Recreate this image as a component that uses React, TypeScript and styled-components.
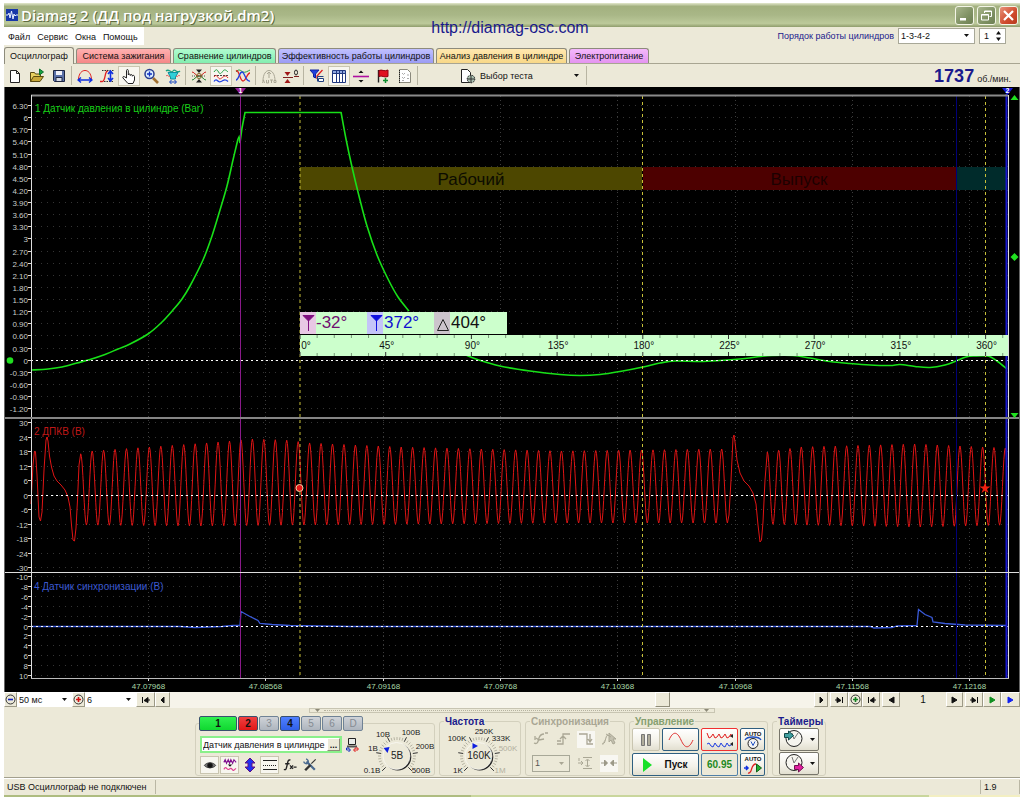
import React from "react";
import styled, { createGlobalStyle } from "styled-components";

const face = "#ece9d8";
const arial = '"Liberation Sans", Arial, sans-serif';

const GlobalStyle = createGlobalStyle`
  * { box-sizing: border-box; }
  body { margin: 0; background: #fff; font-family: ${arial}; font-size: 9px; line-height: 12px; color: #111; }
  button, input, select { font: inherit; color: inherit; margin: 0; padding: 0; border-radius: 0; }
  svg { display: block; flex: none; }
`;

/* ---------- window frame ---------- */

const Window = styled.div`
  position: relative;
  padding: 3px 4px 0;
`;
const TitleBar = styled.header`
  display: flex;
  align-items: center;
  gap: 3px;
  height: 24px;
  padding: 0 2px;
  background: linear-gradient(#e3e8cd, #a3b17f 14%, #a9b787 50%, #bcc99a 85%, #8f9c6c);
`;
const Title = styled.h1`
  flex: 1;
  margin: 0;
  font: 600 15px/22px "Open Sans", "Noto Sans", sans-serif;
  color: #fff;
  text-shadow: 1px 1px 0 #5f6c40;
`;
const WinButton = styled.button<{ $close?: boolean }>`
  display: grid;
  place-items: center;
  width: 19px;
  height: 19px;
  border: 1px solid #f3f5e6;
  border-radius: 3px;
  background: ${(p) => (p.$close ? "linear-gradient(135deg,#e8937a,#cf4a2c 60%,#b73a1e)" : "linear-gradient(135deg,#a8b68c,#7f9163 60%,#6e8053)")};
`;
const SiteLink = styled.a`
  position: absolute;
  top: 19px;
  left: 0;
  right: 4px;
  margin: 0 auto;
  width: max-content;
  font: 16px/18px ${arial};
  color: #1a1a8c;
  text-decoration: none;
`;
const MenuRow = styled.div`
  display: flex;
  justify-content: space-between;
  height: 20px;
  background: ${face};
`;
const Menu = styled.nav`
  display: flex;
  align-items: center;
  gap: 7px;
  height: 18px;
  padding: 1px 6px 0 4px;
  background: #fff;
`;
const MenuItem = styled.button`
  border: 0;
  background: none;
`;
const OrderBox = styled.div`
  display: flex;
  align-items: center;
  gap: 4px;
  padding: 0 14px 3px 0;
  label { color: #1a1a8c; }
`;

const Combo = styled.span<{ $w: number; $h?: number; $line?: string; $plain?: boolean; $off?: boolean }>`
  display: grid;
  align-items: center;
  width: ${(p) => p.$w}px;
  height: ${(p) => p.$h ?? 16}px;
  border: ${(p) => (p.$plain ? "0" : `1px solid ${p.$line ?? "#a8a898"}`)};
  background: ${(p) => (p.$off ? face : "#fff")};
  color: ${(p) => (p.$off ? "#555" : "#111")};
  select {
    grid-area: 1 / 1;
    width: 100%;
    height: 100%;
    padding: 0 2px;
    border: 0;
    appearance: none;
    background: transparent;
    opacity: 1;
  }
  svg {
    grid-area: 1 / 1;
    justify-self: end;
    margin-right: 5px;
    pointer-events: none;
  }
`;
const Spin = styled.span`
  display: flex;
  align-items: center;
  width: 27px;
  height: 16px;
  padding-right: 4px;
  border: 1px solid #a8a898;
  background: #fff;
  input { width: 16px; padding-left: 4px; border: 0; background: none; }
`;

/* ---------- tabs and toolbar ---------- */

const Tabs = styled.div`
  display: flex;
  align-items: flex-end;
  gap: 2px;
  height: 17px;
  background: ${face};
  border-bottom: 1px solid #a8a592;
`;
const Tab = styled.button<{ $w: number; $bg: string; $active?: boolean }>`
  width: ${(p) => p.$w}px;
  height: ${(p) => (p.$active ? 17 : 15)}px;
  margin-bottom: ${(p) => (p.$active ? -1 : 0)}px;
  white-space: nowrap;
  border: 1px solid #8d8b7c;
  border-bottom: 0;
  border-radius: 3px 3px 0 0;
  background: ${(p) => p.$bg};
`;
const Toolbar = styled.div`
  display: flex;
  align-items: center;
  height: 23px;
  background: ${face};
`;
const Tool = styled.button<{ $on?: boolean }>`
  display: grid;
  place-items: center;
  width: 22px;
  height: 20px;
  border: 1px solid ${(p) => (p.$on ? "#c9c5b0" : "transparent")};
  background: ${(p) => (p.$on ? "#f7f6ef" : "none")};
`;
const Sep = styled.span`
  width: 1px;
  height: 19px;
  margin: 0 2px 0 1px;
  background: #b8b5a2;
`;
const TestPicker = styled.button`
  display: flex;
  align-items: center;
  gap: 4px;
  width: 125px;
  height: 20px;
  margin-left: 40px;
  padding-right: 6px;
  border: 0;
  background: none;
  span { flex: 1; text-align: left; }
`;
const Rpm = styled.div`
  display: flex;
  align-items: baseline;
  gap: 3px;
  margin-left: auto;
  padding-right: 9px;
  color: #222;
  strong { font: bold 18px/20px ${arial}; color: #1a1a8c; }
`;

/* ---------- navigation strip ---------- */

const NavRow = styled.div`
  display: flex;
  height: 16px;
  background: ${face};
`;
const NavButton = styled.button<{ $w: number; $gap?: boolean }>`
  display: grid;
  place-items: center;
  width: ${(p) => p.$w}px;
  height: 15px;
  margin-left: ${(p) => (p.$gap ? 2 : 0)}px;
  border: 1px solid;
  border-color: #fff #9c9986 #9c9986 #fff;
  background: ${face};
`;
const Track = styled.div`
  display: flex;
  flex: 1;
  background: #f6f4ea;
`;
const Thumb = styled.button`
  width: 15px;
  height: 15px;
  margin-left: auto;
  margin-right: 144px;
  border: 1px solid;
  border-color: #fff #8f8c79 #8f8c79 #fff;
  background: ${face};
`;
const PageNo = styled.output`
  width: 46px;
  font: 10px/15px ${arial};
  text-align: center;
`;

/* ---------- control panel ---------- */

const Panel = styled.div`
  display: flex;
  flex-direction: column;
  align-items: center;
  height: 70px;
  background: ${face};
  border-bottom: 1px solid #a3a08e;
`;
const Splitter = styled.div`
  display: flex;
  justify-content: space-between;
  align-items: center;
  width: 406px;
  height: 5px;
  padding: 0 5px;
  border: 1px solid #c8c5b2;
`;
const Dots = styled.span`
  flex: 1;
  height: 1px;
  margin: 0 4px;
  border-top: 1px dotted #b5b29f;
`;
const Groups = styled.div`
  display: flex;
  gap: 4px;
  width: 634px;
  height: 60px;
  margin-top: 3px;
`;
const Group = styled.fieldset<{ $w: number }>`
  width: ${(p) => p.$w}px;
  height: 60px;
  min-width: 0;
  margin: 0;
  padding: 0 2px;
  border: 1px solid #d3d0bd;
  border-radius: 3px;
`;
const Legend = styled.legend<{ $color?: string }>`
  margin-left: 2px;
  padding: 0 1px;
  font: bold 10px/11px ${arial};
  color: ${(p) => p.$color ?? "#1a1a8c"};
`;
const ChannelLegend = styled.legend`
  display: flex;
  gap: 1px;
  margin-left: 1px;
  padding: 0;
`;
const Channel = styled.button<{ $bg?: string; $w?: number }>`
  width: ${(p) => p.$w ?? 20}px;
  height: 15px;
  border: 1px solid ${(p) => (p.$bg ? "#39506e" : "#6f8295")};
  border-radius: 2px;
  background: ${(p) => p.$bg ?? "linear-gradient(#cfd3d8,#aeb5be)"};
  color: ${(p) => (p.$bg ? "#111" : "#858b92")};
  font-size: 10px;
  font-weight: ${(p) => (p.$bg ? "bold" : "normal")};
  line-height: 12px;
`;
const Split = styled.div`
  display: flex;
  justify-content: space-between;
`;
const Stack = styled.div`
  display: flex;
  flex-direction: column;
  gap: 3px;
  padding: 5px 0 0 2px;
`;
const Line = styled.div<{ $gap?: number }>`
  display: flex;
  align-items: center;
  gap: ${(p) => p.$gap ?? 2}px;
`;
const NameBox = styled.span`
  display: flex;
  align-items: center;
  width: 142px;
  height: 17px;
  border: 2px solid #8af08a;
  background: #fff;
  input { flex: 1; min-width: 0; padding-left: 1px; border: 0; background: none; outline: 0; }
  button {
    width: 13px;
    height: 13px;
    border: 1px solid;
    border-color: #fff #8f8c79 #8f8c79 #fff;
    background: ${face};
    font: bold 9px/6px ${arial};
  }
`;
const Mini = styled.button<{ $on?: boolean }>`
  display: grid;
  place-items: center;
  width: 19px;
  height: 18px;
  border: 1px solid ${(p) => (p.$on ? "#c9c5b0" : "transparent")};
  background: ${(p) => (p.$on ? "#f7f6ef" : "none")};
`;
const DialSlot = styled.div`
  svg { overflow: visible; }
`;
const GroupRows = styled.div<{ $pad?: number }>`
  display: flex;
  flex-direction: column;
  gap: 2px;
  padding-top: ${(p) => p.$pad ?? 1}px;
`;
const SyncRow = styled.div`
  display: flex;
  align-items: center;
  justify-content: space-between;
  height: 22px;
  padding: 0 4px;
`;
const SyncIcon = styled.button<{ $on?: boolean }>`
  display: grid;
  place-items: center;
  width: 18px;
  height: 17px;
  border: 0;
  background: ${(p) => (p.$on ? "#f8f7f2" : "none")};
`;
const Push = styled.button<{ $w: number; $line?: string; $gap?: number }>`
  display: flex;
  align-items: center;
  justify-content: center;
  gap: ${(p) => p.$gap ?? 12}px;
  width: ${(p) => p.$w}px;
  height: 23px;
  border: 1px solid ${(p) => p.$line ?? "#2f5f80"};
  border-radius: 2px;
  background: linear-gradient(#fff, #f3f1e8 60%, #e2dfd0);
  font: bold 10px/12px ${arial};
  color: #111;
`;
const Value = styled.output`
  display: grid;
  place-items: center;
  width: 37px;
  height: 23px;
  border: 1px solid #5080a8;
  border-radius: 2px;
  font: bold 10px/12px ${arial};
  color: #1e8a1e;
`;

/* ---------- status bar ---------- */

const StatusBar = styled.footer`
  display: flex;
  align-items: center;
  height: 17px;
  background: ${face};
  border-top: 1px solid #fff;
`;
const Cell = styled.span<{ $w?: number }>`
  flex: ${(p) => (p.$w ? "none" : 1)};
  width: ${(p) => (p.$w ? `${p.$w}px` : "auto")};
  height: 14px;
  padding-left: 3px;
  border-right: 1px solid #bab7a4;
  line-height: 14px;
  white-space: nowrap;
`;
const Strip = styled.div`
  height: 2px;
  background: linear-gradient(90deg, #aebc80 46%, #c9d69c 46% 91%, #f3efc2 91%);
`;

/* ---------- icons ---------- */

const Ico = ({ s = 16, children }: { s?: number; children: React.ReactNode }) => (
  <svg width={s} height={s} viewBox="0 0 16 16" fill="none" stroke="#222" strokeWidth="1" aria-hidden="true">
    {children}
  </svg>
);
const Arrow = ({ c = "#111" }: { c?: string }) => (
  <svg width="5" height="3" viewBox="0 0 5 3" aria-hidden="true">
    <path d="M0 0h5L2.500 3z" fill={c} />
  </svg>
);

const icons: Record<string, React.ReactNode> = {
  file: <path d="M3.500 2.500h6l3 3v9h-9zM9.500 2.500v3h3" fill="#fff" />,
  open: (
    <>
      <path d="M1.500 13.500v-9h4l1 1.500h5v2.500" fill="#e8d060" stroke="#5a4a10" />
      <path d="M1.500 13.500l3-5h10l-3.500 5z" fill="#c8a838" stroke="#5a4a10" />
      <path d="M10.500 1v6l4-3z" fill="#18a040" stroke="#0c7030" />
    </>
  ),
  save: (
    <>
      <path d="M2.500 2.500h11v11h-10l-1-1z" fill="#5a70a8" stroke="#1c2440" />
      <path d="M5 3h6v4H5z" fill="#f0f0f8" stroke="none" />
      <path d="M5 9.500h6v4H5z" fill="#d8dce8" stroke="#1c2440" />
    </>
  ),
  arc: (
    <>
      <path d="M1.500 11C2 5 5 2.500 8 2.500S14 5 14.500 11" stroke="#e02020" />
      <path d="M1 12h14M4 9.500L1 12l3 2.500M12 9.500l3 2.500-3 2.500" stroke="#1030e0" strokeWidth="1.400" />
    </>
  ),
  rise: (
    <>
      <path d="M1 13.500h2c4 0 2-10 6-11" stroke="#e02020" strokeWidth="1.300" />
      <path d="M3 2.500h12M5 13.500h10" stroke="#333" strokeDasharray="1.500 1" />
      <path d="M11.500 3.500v9M9 6l2.500-3L14 6M9 10l2.500 3 2.500-3" stroke="#1030e0" strokeWidth="1.600" />
    </>
  ),
  hand: (
    <path
      d="M5.500 10V2.500c0-1.300 1.800-1.300 1.800 0V7c0-1.300 2-1.300 2 0v.5c0-1.200 2-1.200 2 0v.7c0-1.200 2.200-1.100 2.200.3V12l-1.500 3.500H7L2 10c-.8-1.300.8-2 1.600-1.200z"
      fill="#fff"
    />
  ),
  zoom: (
    <>
      <path d="M10 10l5 5" stroke="#a07030" strokeWidth="2.600" />
      <circle cx="6.500" cy="6" r="4.500" fill="#d8ecff" stroke="#283c90" strokeWidth="1.500" />
      <path d="M4 6h5M6.500 3.500v5" stroke="#1030c0" strokeWidth="1.300" />
    </>
  ),
  merge: (
    <>
      <path d="M1 3c3-3 5 3 7 0s4 3 7 0" stroke="#18a080" strokeWidth="1.300" />
      <path d="M3 4.500h10L10.500 9v2h-5V9z" fill="#30d0d8" stroke="#1090a0" />
      <path d="M1 8c2-2 3 2 4 0M11 8c2 2 2-2 4 0" stroke="#e05050" />
      <path d="M5 14h6M6.500 12l-2 2 2 2M9.500 12l2 2-2 2" stroke="#1040c0" />
    </>
  ),
  cross: (
    <>
      <path d="M5 1.500h6L8 5zM5 14.500h6L8 11z" fill="#222" stroke="none" />
      <path d="M1 4c3 0 3 4 7 4s4-4 7-4" stroke="#d02020" />
      <path d="M1 12c3 0 3-4 7-4s4 4 7 4" stroke="#208030" />
      <path d="M1 8h14" stroke="#555" strokeDasharray="1 1" />
      <circle cx="8" cy="8" r="2.500" stroke="#806020" />
    </>
  ),
  waves: (
    <>
      <path d="M1 4c2-3 3-3 4.500 0S8.500 5 10 3s3-1 5 1" stroke="#20a040" />
      <path d="M1 7.500h14" stroke="#444" strokeDasharray="2 1" />
      <path d="M1 9c2-3 3-1 4.500 1s3 0 4.500-1 3-2 5 1" stroke="#e02020" />
      <path d="M1 13.500c2-3 3-1 4.500 0s3 0 4.500-1 3-1 5 1" stroke="#2040e0" strokeWidth="1.300" />
    </>
  ),
  overlay: (
    <>
      <path d="M1 4c3-4 5-1 7 0s5-1 7-2" stroke="#20a040" />
      <path d="M1 3c3-2 4 10 7 10s4-8 7-8" stroke="#e02020" strokeWidth="1.300" />
      <path d="M1 12c3 0 3-8 6-8s3 10 8 9" stroke="#2040e0" strokeWidth="1.300" />
    </>
  ),
  autoGray: (
    <g stroke="#aaa795">
      <path d="M2 13C2 6 5 2.500 8 2.500S14 6 14 13M8 4v6M6 6l2-2 2 2" />
      <path d="M1.500 15l1-3 1 3M5.500 12v3h2v-3M9 12h3M10.500 12v3M13 12.500h2v2h-2z" />
    </g>
  ),
  zero: (
    <>
      <path d="M0 9.500h10M11 8.500h5" stroke="#802020" />
      <path d="M1.500 4h6l-3 4zM1.500 15h6l-3-4z" fill="#a01818" stroke="none" />
      <ellipse cx="13" cy="4.500" rx="1.500" ry="2.500" />
    </>
  ),
  filter: (
    <>
      <path d="M1 2h9L6.500 6v4l-2-1V6z" fill="#2040e0" stroke="#1020a0" />
      <path d="M13.500 2L8 8v3" stroke="#e02020" strokeWidth="1.300" />
      <path d="M8.500 8.500h6M8.500 8.500v5" stroke="#204080" />
      <path d="M9.500 10.500h5v3h-5z" fill="#fff" stroke="#204080" />
    </>
  ),
  table: (
    <>
      <path d="M1.500 2.500h13v12h-13z" fill="#fff" stroke="#203880" />
      <path d="M2 3h12v2.500H2z" fill="#90a8e0" stroke="none" />
      <path d="M1.500 5.500h13M5.500 3v11M8.500 3v11M11.500 3v11" stroke="#203880" />
    </>
  ),
  center: (
    <>
      <path d="M0 8.500h16" stroke="#b010a0" strokeWidth="1.600" />
      <path d="M5.500 5h5L8 2.500zM5.500 12h5L8 14.500z" fill="#111" stroke="none" />
    </>
  ),
  flag: (
    <>
      <path d="M3.500 2v12.500" strokeWidth="1.400" />
      <path d="M4 2.500c3-1.500 5 1.500 9-.5v6.500c-4 1.500-6-1.500-9 0z" fill="#e01020" stroke="#900010" />
      <path d="M10.500 10v5M8 12.500h5" stroke="#109030" strokeWidth="1.500" />
    </>
  ),
  note: (
    <>
      <path d="M2.500 1.500h8l3 3v10h-11z" fill="#fff" stroke="#8a897c" />
      <path d="M5 5l1.500 1.500L8 5M5 9l1.500 1.500L8 9M5 12.500h2M10 10.500h2M10 7h2" stroke="#aaa" />
      <path d="M2.500 2v13" strokeDasharray="1 1" />
    </>
  ),
  test: (
    <>
      <path d="M1.500 1.500h6l3 3v10h-9z" fill="#fff" />
      <circle cx="11" cy="11" r="3.800" fill="#a9c0b0" stroke="#222" strokeDasharray="1.500 .8" />
      <path d="M7 11h8M11 7v8" stroke="#333" />
    </>
  ),
  rename: (
    <>
      <path d="M4.500 1.500h7v6h-7z" fill="#e8ece8" stroke="#222" />
      <path d="M3 9.500h10" stroke="#555" strokeWidth="2" />
      <path d="M5 11H2.500v2H6M4.500 15L6.500 13l-2-2" stroke="#1030c0" />
      <path d="M11 11h3v2h-4M11.500 15l-2-2 2-2" stroke="#e02020" />
    </>
  ),
  eye: (
    <>
      <path d="M1.500 8.500C4 4.500 12 4.500 14.500 8.500 12 12 4 12 1.500 8.500z" fill="#777" stroke="#333" />
      <circle cx="8" cy="8.500" r="2.800" fill="#111" />
    </>
  ),
  noise: (
    <>
      <path d="M1 5l1.500-3L4 6l2-4 1.500 4L9 2l2 4 1.500-4L15 5" stroke="#801090" strokeWidth="1.300" />
      <path d="M5.500 7.500h5L8 10z" fill="#111" stroke="none" />
      <path d="M1 13c2-4 3-1 4.500 0s3-3 5 0 3-1 4.500-1" stroke="#e04090" strokeWidth="1.300" />
    </>
  ),
  updown: <path d="M8 1l5 5h-3v4h3l-5 5-5-5h3V6H3z" fill="#2030f0" stroke="#601080" />,
  lines: (
    <>
      <path d="M1 3.500h14M1 12.500h14" />
      <path d="M1 8.500h14" strokeDasharray="1 1" />
    </>
  ),
  fx: (
    <>
      <path d="M8.500 2.500C5.500 1 5.500 5 4.500 9s-1 5-3.500 4M2.500 6.500h5" strokeWidth="1.600" />
      <path d="M8 8.500l3.500 4M11.500 8.500l-3.500 4M12 10.500h3.500" strokeWidth="1.400" />
    </>
  ),
  tools: (
    <>
      <path d="M4 4l9.500 9.500" stroke="#4a6a90" strokeWidth="2.600" />
      <path d="M1 4c0 2 3 3.500 4.500 1.500S5 1.500 3.500 1" stroke="#4a6a90" strokeWidth="1.600" />
      <path d="M14.500 1.500l-5 5" stroke="#333" strokeWidth="1.300" />
      <path d="M8.500 8L2.500 14" stroke="#333" strokeWidth="2.800" />
    </>
  ),
  syncA: <path d="M1 12c4 2 4-2 5-5s2-4 5-4M3 7l3 2 5-1M2 5v4M12 2h3" stroke="#aaa795" strokeWidth="1.300" />,
  syncB: <path d="M1 13h6V3h7M4 8l3-3 3 3M1 10h4" stroke="#aaa795" strokeWidth="1.300" />,
  syncC: <path d="M1 3h8v10h6M12 3v7M10 8l2 3 2-3" stroke="#aaa795" strokeWidth="1.300" />,
  syncD: <path d="M1 13c4 1 3-9 6-9M5 3l5 3M8 2v9l2-2 2 4 2-1-2-4h3z" fill="#c4c1b0" stroke="#aaa795" />,
  syncE: <path d="M6 2.500h9M6 13.500h9M10.500 5v6M8.500 6l2-2 2 2M8.500 10l2 2 2-2M1 8h5M4 6l2 2-2 2M2 3v3" stroke="#aaa795" />,
  syncF: <path d="M0 8h6M10 8h6M3.500 5v6l3-3zM12.500 5v6l-3-3z" fill="#9c9988" stroke="#9c9988" />,
};

const navShapes: Record<string, string> = {
  first: "M1.500 1v6M3 4.500L7 1.500v5zM7 4h2",
  last: "M7.500 1v6M6 4.500L2 1.500v5zM2 4H0",
  prev: "M6 1v6L3 4z",
  prevWide: "M7 1v6L2 4z",
  next: "M3 1v6l3-3z",
  nextWide: "M2 1v6l5-3z",
};
const NavIcon = ({ kind, c = "#111" }: { kind: string; c?: string }) => (
  <svg width="9" height="8" viewBox="0 0 9 8" fill={c} stroke={c} strokeWidth="1" aria-hidden="true">
    <path d={navShapes[kind]} />
  </svg>
);
const Round = ({ c, plus }: { c: string; plus?: boolean }) => (
  <svg width="11" height="11" viewBox="0 0 11 11" fill="none" aria-hidden="true">
    <circle cx="5.500" cy="5.500" r="4.500" stroke="#333" />
    <path d={plus ? "M3 5.500h5M5.500 3v5" : "M3 5.500h5"} stroke={c} strokeWidth="1.600" />
  </svg>
);

/* ---------- dial ---------- */

type Mark = { x: number; y: number; t: string; off?: boolean };
const Dial = ({ value, marks, at }: { value: string; marks: Mark[]; at: [number, number, number] }) => {
  const ticks = Array.from({ length: 31 }, (_, i) => {
    const a = ((135 + i * 9) * Math.PI) / 180;
    const big = i % 6 === 0;
    return (
      <line
        key={i}
        x1={37 + 16 * Math.cos(a)}
        y1={25 + 16 * Math.sin(a)}
        x2={37 + (big ? 21 : 19) * Math.cos(a)}
        y2={25 + (big ? 21 : 19) * Math.sin(a)}
        stroke={big ? "#333" : "#b5b2a1"}
      />
    );
  });
  return (
    <svg width="74" height="44" viewBox="0 0 74 44" fontFamily={arial} fontSize="8" role="img">
      {ticks}
      <circle cx="37.800" cy="26" r="13.500" fill="#222" />
      <circle cx="36.500" cy="25" r="13.500" fill={face} stroke="#fff" strokeWidth=".6" />
      <path d="M-3 -2.500h6L0 3z" fill="#1020e0" transform={`translate(${at[0]} ${at[1]}) rotate(${at[2]})`} />
      <text x="37" y="28" textAnchor="middle" fontSize="10" fill="#222">
        {value}
      </text>
      {marks.map((m) => (
        <text key={m.t} x={m.x} y={m.y} textAnchor="middle" fill={m.off ? "#b3b0a0" : "#222"}>
          {m.t}
        </text>
      ))}
    </svg>
  );
};

/* ---------- oscilloscope chart ---------- */

const L = 31;
const R = 1008;

const smooth = (p: number[][]) => {
  let d = `M${p[0][0]} ${p[0][1]}`;
  for (let i = 0; i < p.length - 1; i++) {
    const a = p[i - 1] ?? p[i];
    const b = p[i];
    const c = p[i + 1];
    const e = p[i + 2] ?? c;
    d += `C${b[0] + (c[0] - a[0]) / 6} ${b[1] + (c[1] - a[1]) / 6} ${c[0] - (e[0] - b[0]) / 6} ${c[1] - (e[1] - b[1]) / 6} ${c[0]} ${c[1]}`;
  }
  return d;
};
const poly = (p: number[][]) => "M" + p.map((q) => q.join(" ")).join("L");

const rising = smooth([
  [31, 370], [48, 369], [62, 367], [77, 363], [90, 359.500], [105, 354.500], [118, 349], [130, 344], [148, 334], [161, 323],
  [173, 310], [182, 299], [190, 286], [203, 260], [212, 236], [220, 210], [227, 186], [233, 160], [238, 139],
]);
const plateau = poly([[238, 139], [239, 137], [240, 143], [242, 128], [245, 112.500], [341, 112.500]]);
const falling = smooth([[341, 112], [346, 139], [352, 167], [359, 196], [367, 226], [377, 255], [388, 279], [398, 297], [409, 311]]);
const tail = smooth([
  [466, 355], [476, 359], [500, 366], [530, 371], [560, 374.500], [580, 375.500], [600, 374.500], [620, 371.500], [643, 367],
  [660, 363], [675, 361], [700, 361.500], [720, 360.500], [745, 358.500], [760, 356.500], [772, 355.500], [793, 355.500],
  [810, 358], [830, 361.500], [850, 363.500], [870, 365], [890, 365.500], [900, 364.500], [915, 366.500], [930, 367.500],
  [945, 365], [956, 361], [966, 357], [974, 356], [988, 356], [997, 361], [1007, 369],
]);

const level = (stops: number[][], x: number) => {
  for (let i = 1; i < stops.length; i++) {
    if (x <= stops[i][0]) {
      const [x0, y0] = stops[i - 1];
      const [x1, y1] = stops[i];
      return y0 + ((y1 - y0) * (x - x0)) / (x1 - x0);
    }
  }
  return stops[stops.length - 1][1];
};
const peaks = [[80, 454], [92, 451], [150, 447], [220, 442], [250, 439], [285, 440], [310, 443], [400, 447], [560, 451], [722, 449], [767, 452], [800, 447], [915, 444], [1005, 448]];
const troughs = [[80, 525], [200, 526], [300, 525], [560, 523], [727, 523], [800, 525], [920, 527], [1008, 525]];
const teeth = (from: number, period: number, to: number) => {
  const out: number[][] = [];
  for (let x = from; x <= to; x += period / 16) {
    const hi = level(peaks, x);
    const lo = level(troughs, x);
    out.push([x, (hi + lo) / 2 - ((lo - hi) / 2) * Math.cos(((x - from) / period) * 2 * Math.PI)]);
  }
  return out;
};
const crank = poly([
  [31, 504], [33, 465], [34.500, 451], [35.500, 452], [37, 475], [39, 517], [40.500, 521], [42, 512], [44, 470], [46, 440], [47, 437], [48, 441],
  [49.500, 456], [51.500, 467], [54, 476], [57, 481], [61, 485], [65, 490], [68, 497], [70, 507], [71.500, 525], [73, 540], [74.500, 541], [76, 528],
  [77.500, 500], [79, 465],
  ...teeth(80.700, 11.446, 728),
  [729, 515], [731, 480], [733, 438], [734, 435], [735, 442], [737, 460], [740, 473], [744, 481], [749, 486], [753, 493], [756, 504],
  [758, 525], [760, 542], [761.500, 540], [763, 522], [765, 480],
  ...teeth(767.300, 11.333, 1007),
]);
const sync = poly([
  [31, 626.500], [180, 626.500], [195, 627.500], [222, 626.500], [233, 625.500], [240, 625.500], [241, 611.500], [249, 616], [258, 620.500], [260, 623.500],
  [272, 624.500], [290, 625.500], [320, 626], [350, 626.500], [870, 626.500], [874, 628], [892, 627.500], [897, 626], [917, 625.500], [918.500, 609.500], [925, 614.500],
  [932, 617.500], [933, 622], [945, 623.500], [965, 625], [1007, 625.500],
]);

const axis = (from: number, to: number, step: number, y0: number, dy: number, fixed: boolean) => {
  const n = Math.round((to - from) / step);
  return Array.from({ length: n + 1 }, (_, i) => {
    const v = from + i * step;
    const near = Math.round(v * 100) / 100;
    return { y: Math.round(y0 + i * dy) + 0.5, t: fixed && !Number.isInteger(near) ? near.toFixed(2) : String(near + 0) };
  });
};
const scales = [
  ...axis(6.3, -1.2, -0.3, 105, 12.13, true),
  ...axis(30, -30, -6, 422, 14.5, false),
  ...axis(-10, 10, 2, 576.300, 9.85, false),
];
const times = ["47.07968", "47.08568", "47.09168", "47.09768", "47.10368", "47.10968", "47.11568", "47.12168"];
const timeX = (i: number) => Math.round(148 + i * 117.3) + 0.5;
const degX = (d: number) => 300 + (d * 685.6) / 360;

const ChartSvg = styled.svg`
  width: 100%;
  height: auto;
  background: #000;
  font-family: ${arial};
`;

const Chart = () => (
  <ChartSvg viewBox="4 87 1016 605" role="img" aria-label="Осциллограммы">
    <g stroke="#343434" strokeDasharray="1 5">
      {scales.map((s, i) => (
        <line key={i} x1={L + 4} x2={R} y1={s.y} y2={s.y} />
      ))}
    </g>
    <g stroke="#3c3c3c" strokeDasharray="1 3">
      {times.map((t, i) => (
        <line key={t} x1={timeX(i)} x2={timeX(i)} y1="96" y2="678" />
      ))}
    </g>

    <rect x="300" y="167" width="342" height="23" fill="#4d4700" />
    <rect x="643" y="167" width="313" height="23" fill="#4d0000" />
    <rect x="957" y="167" width="50" height="23" fill="#002b2b" />
    <g fontSize="17" textAnchor="middle">
      <text x="471" y="185" fill="#0c0c00">Рабочий</text>
      <text x="799" y="185" fill="#1c0000">Выпуск</text>
    </g>

    <path d={crank} fill="none" stroke="#e01414" />
    <path d={sync} fill="none" stroke="#3a5ad8" strokeWidth="1.300" />
    <g fill="none" stroke="#18e018" strokeWidth="1.600">
      <path d={rising} />
      <path d={plateau} />
      <path d={falling} />
      <path d={tail} />
    </g>

    <g stroke="#fff" strokeDasharray="2 3">
      <path d={`M${L} 360.500H${R}M${L} 495.500H${R}M${L} 626.500H${R}`} />
    </g>

    <path d="M240.500 92V678" stroke="#8a1a8a" />
    <path d="M956.500 96V678" stroke="#000078" />
    <path d="M300 96V678M642.500 96V678M985.500 96V678" stroke="#c8c038" strokeDasharray="3 3" />
    <path d="M1006.500 94V678" stroke="#1818d0" strokeWidth="2" />

    <path d="M31 95.500H1008" stroke="#8a8a8a" strokeWidth="2" />
    <path d="M31.500 95V679M1008.500 95V679" stroke="#ddd" />
    <path d="M31 678.500H1009" stroke="#bbb" />
    <path d="M4 418H1020" stroke="#858585" strokeWidth="2" />
    <path d="M4 572.500H1020" stroke="#ddd" />
    <path d="M4.500 87V692M1019.500 87V692" stroke="#666" />

    <g fontSize="8" fill="#c8ccc8" textAnchor="end">
      {scales.map((s, i) => (
        <text key={i} x="28" y={s.y + 3}>{s.t}</text>
      ))}
    </g>
    <g stroke="#ddd">
      {scales.map((s, i) => (
        <line key={i} x1="28" x2="31" y1={s.y} y2={s.y} />
      ))}
      {times.map((t, i) => (
        <line key={t} x1={timeX(i)} x2={timeX(i)} y1="679" y2="681" />
      ))}
    </g>
    <g fontSize="8" fill="#a8d8a8" textAnchor="middle">
      {times.map((t, i) => (
        <text key={t} x={timeX(i)} y="689">{t}</text>
      ))}
    </g>

    <g fontSize="10">
      <text x="35" y="112" fill="#18d018">1 Датчик давления в цилиндре (Bar)</text>
      <text x="34" y="435" fill="#c01818">2 ДПКВ (В)</text>
      <text x="34" y="590" fill="#3a58d0">4 Датчик синхронизации (В)</text>
    </g>

    <rect x="300" y="335" width="708" height="21" fill="#ccffcc" />
    {Array.from({ length: 42 }, (_, i) => {
      const x = degX(i * 9);
      const n = i % 5 === 0 ? 4 : 3;
      return <path key={i} d={`M${x} 335v${n}M${x} 356v${-n}`} stroke={i % 5 === 0 ? "#333" : "#779977"} />;
    })}
    <g fontSize="10" fill="#111" textAnchor="middle">
      <text x="306" y="349">0°</text>
      {[45, 90, 135, 180, 225, 270, 315, 360].map((d) => (
        <text key={d} x={degX(d) + 1} y="349">{d}°</text>
      ))}
    </g>

    <rect x="300" y="312" width="207" height="22" fill="#ccffcc" />
    <rect x="300" y="312" width="16" height="22" fill="#e8c8e4" />
    <rect x="367" y="312" width="16" height="22" fill="#c4c4f8" />
    <rect x="434" y="312" width="16" height="22" fill="#ccc4cc" />
    <path d="M303 315.500h11l-5.500 5.500zM308.500 320v11" fill="#801080" stroke="#801080" />
    <path d="M371 315.500h11l-5.500 5.500zM376.500 320v11" fill="#1010e0" stroke="#1010e0" />
    <path d="M437.500 330.500h11l-5.500-11z" fill="none" stroke="#222" />
    <g fontSize="17">
      <text x="316" y="328" fill="#701070">-32°</text>
      <text x="384" y="328" fill="#1010d0">372°</text>
      <text x="451" y="328" fill="#111">404°</text>
    </g>

    <path d="M235 88h11l-5.500 7z" fill="#901a90" />
    <path d="M1002 88h11l-5.500 7z" fill="#1a1ad8" />
    <g fontSize="7" fontWeight="bold" fill="#fff" textAnchor="middle">
      <text x="240.500" y="93">1</text>
      <text x="1007.500" y="93">2</text>
    </g>

    <circle cx="10" cy="360.500" r="3.300" fill="#20e020" />
    <path d="M1010.500 100h8l-4-5zM1010.500 257l4-4 4 4-4 4zM1010.500 413h8l-4 5z" fill="#20e020" />
    <circle cx="299.500" cy="488" r="3.500" fill="#e81818" stroke="#f0d0a0" />
    <path d="M985 483l1.500 3.500h4L987 489l1.500 4-3.500-2.500-3.500 2.500 1.500-4-3.500-2.500h4z" fill="#f02010" />
  </ChartSvg>
);

/* ---------- page ---------- */

const tools: (string | null)[] = [
  "file", "open", "save", null, "arc", "rise", "hand", "zoom", "merge", null, "cross", "waves", "overlay", null,
  "autoGray", "zero", null, "filter", "table", "center", "flag", "note", null,
];
const pressed = ["hand", "waves", "table"];

const AutoKnob = () => (
  <svg width="20" height="20" viewBox="0 0 20 20" fill="none" stroke="#222" fontFamily={arial} fontSize="6" fontWeight="bold">
    <text x="10" y="6" textAnchor="middle" fill="#111" stroke="none">AUTO</text>
    <path d="M2 10c2-4 14-4 16 0" stroke="#2050c0" strokeWidth="1.300" />
    <circle cx="10" cy="13.500" r="5" fill="#f4f4f4" />
    <path d="M8 11.500l2 4 2-4" stroke="#2050c0" />
  </svg>
);
const AutoRun = () => (
  <svg width="20" height="20" viewBox="0 0 20 20" fill="none" fontFamily={arial} fontSize="6" fontWeight="bold">
    <text x="10" y="6" textAnchor="middle" fill="#111">AUTO</text>
    <path d="M1 13h4M3 11l2 2-2 2" stroke="#1030e0" strokeWidth="1.500" />
    <path d="M5 18c5 1 2-9 8-9" stroke="#e02020" strokeWidth="1.300" />
    <path d="M13.500 9v8l5-4z" fill="#20b030" stroke="#106018" />
  </svg>
);
const Timer = ({ out }: { out?: boolean }) => (
  <svg width="20" height="20" viewBox="1 0 20 20" fill="none" stroke="#222">
    <circle cx="11" cy="9.500" r="8" fill="#f6f5ef" />
    <path d="M9 4l2 6 4-6" stroke="#777" />
    {out ? (
      <path d="M11.500 12.500h4v-2.500l5 4.500-5 4.500v-2.500h-4z" fill="#e020a0" stroke="#701050" />
    ) : (
      <path d="M1.500 4.500h4V2l5 4.500-5 4.500V8.500h-4z" fill="#40a0a0" stroke="#104848" />
    )}
  </svg>
);

export default function App() {
  return (
    <>
      <GlobalStyle />
      <Window>
        <TitleBar>
          <svg width="12" height="12" viewBox="0 0 12 12" aria-hidden="true">
            <path d="M0 0h12v12H0z" fill="#1838a8" />
            <path d="M0 6h2l1-2 1 5 1.500-7L7 10l1-5 1 2 1-1h2" fill="none" stroke="#e8f0ff" />
          </svg>
          <Title>Diamag 2 (ДД под нагрузкой.dm2)</Title>
          <WinButton aria-label="Свернуть">
            <svg width="11" height="11" viewBox="0 0 11 11"><path d="M1 8h6v2.500H1z" fill="#fff" /></svg>
          </WinButton>
          <WinButton aria-label="Развернуть">
            <svg width="11" height="11" viewBox="0 0 11 11" fill="none" stroke="#fff">
              <path d="M3.500 3V1h7v5.500H8.500M3.500 1.500h7M.5 4.500h7v5.500h-7zM.5 5h7" />
            </svg>
          </WinButton>
          <WinButton $close aria-label="Закрыть">
            <svg width="11" height="11" viewBox="0 0 11 11"><path d="M1 1l9 9M10 1l-9 9" stroke="#fff" strokeWidth="2.200" /></svg>
          </WinButton>
        </TitleBar>
        <SiteLink href="#site">http://diamag-osc.com</SiteLink>

        <MenuRow>
          <Menu>
            {["Файл", "Сервис", "Окна", "Помощь"].map((m) => (
              <MenuItem key={m}>{m}</MenuItem>
            ))}
          </Menu>
          <OrderBox>
            <label htmlFor="order">Порядок работы цилиндров</label>
            <Combo $w={77}>
              <select id="order"><option>1-3-4-2</option></select>
              <Arrow />
            </Combo>
            <Spin>
              <input aria-label="Цилиндр" defaultValue="1" />
              <svg width="5" height="10" viewBox="0 0 5 10"><path d="M0 3.500h5L2.500 0zM0 6.500h5L2.500 10z" fill="#111" /></svg>
            </Spin>
          </OrderBox>
        </MenuRow>

        <Tabs role="tablist">
          <Tab role="tab" $active $w={70} $bg={face}>Осциллограф</Tab>
          <Tab role="tab" $w={95} $bg="linear-gradient(#ffb0b0,#f58888)">Система зажигания</Tab>
          <Tab role="tab" $w={103} $bg="linear-gradient(#b0fcd0,#84eeb0)">Сравнение цилиндров</Tab>
          <Tab role="tab" $w={156} $bg="linear-gradient(#c0c0ff,#9c9cf4)">Эффективность работы цилиндров</Tab>
          <Tab role="tab" $w={131} $bg="linear-gradient(#ffe8b0,#f8d888)">Анализ давления в цилиндре</Tab>
          <Tab role="tab" $w={80} $bg="linear-gradient(#f4b8fc,#e494f0)">Электропитание</Tab>
        </Tabs>

        <Toolbar>
          {tools.map((t, i) =>
            t ? (
              <Tool key={i} $on={pressed.includes(t)} aria-label={t}>
                <Ico>{icons[t]}</Ico>
              </Tool>
            ) : (
              <Sep key={i} />
            ),
          )}
          <TestPicker>
            <Ico>{icons.test}</Ico>
            <span>Выбор теста</span>
            <Arrow />
          </TestPicker>
          <Sep />
          <Rpm><strong>1737</strong> об./мин.</Rpm>
        </Toolbar>

        <Chart />

        <NavRow>
          <NavButton $w={13} aria-label="Уменьшить"><Round c="#1020c0" /></NavButton>
          <Combo $w={55} $h={15} $plain>
            <select aria-label="Развёртка"><option>50 мс</option></select>
            <Arrow />
          </Combo>
          <NavButton $w={13} aria-label="Увеличить"><Round c="#d01010" plus /></NavButton>
          <Combo $w={51} $h={15} $plain>
            <select aria-label="Масштаб"><option>6</option></select>
            <Arrow />
          </Combo>
          <NavButton $w={19} aria-label="В начало"><NavIcon kind="first" /></NavButton>
          <NavButton $w={15} aria-label="Назад"><NavIcon kind="prev" /></NavButton>
          <Track><Thumb aria-label="Прокрутка" /></Track>
          <NavButton $w={14} aria-label="Вперёд"><NavIcon kind="next" /></NavButton>
          <NavButton $w={18} $gap aria-label="В конец"><NavIcon kind="last" /></NavButton>
          <NavButton $w={14} aria-label="Добавить"><Round c="#108020" plus /></NavButton>
          <NavButton $w={18} aria-label="Первая страница"><NavIcon kind="first" /></NavButton>
          <NavButton $w={18} $gap aria-label="Предыдущая страница"><NavIcon kind="prevWide" /></NavButton>
          <PageNo>1</PageNo>
          <NavButton $w={17} aria-label="Следующая страница"><NavIcon kind="nextWide" /></NavButton>
          <NavButton $w={18} $gap aria-label="Последняя страница"><NavIcon kind="last" /></NavButton>
          <NavButton $w={18} aria-label="Пуск записи"><NavIcon kind="nextWide" c="#109020" /></NavButton>
          <NavButton $w={19} aria-label="Просмотр"><NavIcon kind="nextWide" c="#1020f0" /></NavButton>
        </NavRow>

        <Panel>
          <Splitter><Arrow c="#8c8978" /><Dots /><Arrow c="#8c8978" /></Splitter>
          <Groups>
            <Group $w={240}>
              <ChannelLegend>
                <Channel $w={38} $bg="linear-gradient(#30f050,#10d830)">1</Channel>
                <Channel $bg="linear-gradient(#f04040,#e01818)">2</Channel>
                <Channel>3</Channel>
                <Channel $bg="linear-gradient(#5080ff,#3060e8)">4</Channel>
                <Channel>5</Channel>
                <Channel>6</Channel>
                <Channel>D</Channel>
              </ChannelLegend>
              <Split>
                <Stack>
                  <Line>
                    <NameBox>
                      <input aria-label="Название канала" defaultValue="Датчик давления в цилиндре" />
                      <button aria-label="Выбрать">...</button>
                    </NameBox>
                    <Ico>{icons.rename}</Ico>
                  </Line>
                  <Line $gap={1}>
                    <Mini $on aria-label="Показать"><Ico s={14}>{icons.eye}</Ico></Mini>
                    <Mini $on aria-label="Сглаживание"><Ico s={14}>{icons.noise}</Ico></Mini>
                    <Mini aria-label="Инверсия"><Ico>{icons.updown}</Ico></Mini>
                    <Mini $on aria-label="Уровни"><Ico>{icons.lines}</Ico></Mini>
                    <Mini aria-label="Функция"><Ico s={14}>{icons.fx}</Ico></Mini>
                    <Mini aria-label="Настройки"><Ico s={14}>{icons.tools}</Ico></Mini>
                  </Line>
                </Stack>
                <DialSlot>
                  <Dial
                    value="5В"
                    at={[27, 19, -10]}
                    marks={[
                      { x: 12, y: 42, t: "0.1В" }, { x: 13, y: 20, t: "1В" }, { x: 23, y: 6, t: "10В" },
                      { x: 51, y: 4, t: "100В" }, { x: 65, y: 18, t: "200В" }, { x: 61, y: 42, t: "500В" },
                    ]}
                  />
                </DialSlot>
              </Split>
            </Group>

            <Group $w={82}>
              <Legend>Частота</Legend>
              <GroupRows $pad={4}>
                <DialSlot>
                  <Dial
                    value="160K"
                    at={[33, 15, -90]}
                    marks={[
                      { x: 16, y: 42, t: "1K" }, { x: 15, y: 10, t: "100K" }, { x: 42, y: 3, t: "250K" },
                      { x: 59, y: 10, t: "333K" }, { x: 66, y: 20, t: "500K", off: true }, { x: 58, y: 42, t: "1M", off: true },
                    ]}
                  />
                </DialSlot>
              </GroupRows>
            </Group>

            <Group $w={100}>
              <Legend $color="#a9a694">Синхронизация</Legend>
              <GroupRows>
                <SyncRow>
                  <SyncIcon disabled aria-label="Фронт"><Ico>{icons.syncA}</Ico></SyncIcon>
                  <SyncIcon disabled aria-label="Подъём"><Ico>{icons.syncB}</Ico></SyncIcon>
                  <SyncIcon disabled $on aria-label="Спад"><Ico>{icons.syncC}</Ico></SyncIcon>
                  <SyncIcon disabled aria-label="Вручную"><Ico>{icons.syncD}</Ico></SyncIcon>
                </SyncRow>
                <SyncRow>
                  <Combo $w={38} $h={17} $off>
                    <select aria-label="Канал синхронизации" disabled><option>1</option></select>
                    <Arrow c="#a9a694" />
                  </Combo>
                  <SyncIcon disabled aria-label="Уровень"><Ico>{icons.syncE}</Ico></SyncIcon>
                  <SyncIcon disabled $on aria-label="Ширина"><Ico>{icons.syncF}</Ico></SyncIcon>
                </SyncRow>
              </GroupRows>
            </Group>

            <Group $w={139}>
              <Legend $color="#86a070">Управление</Legend>
              <GroupRows>
                <Line>
                  <Push $w={28} $line="#c9c5b0" aria-label="Пауза">
                    <svg width="10" height="12" viewBox="0 0 10 12" fill="#b0ad9c" stroke="#777"><path d="M.5.5h3v11h-3zM6.500.5h3v11h-3z" /></svg>
                  </Push>
                  <Push $w={37} aria-label="Сигнал">
                    <svg width="26" height="18" viewBox="0 0 26 18"><path d="M1 9C5 0 9 0 13 9s8 9 12 0" fill="none" stroke="#e03030" /></svg>
                  </Push>
                  <Push $w={37} $line="#f03030" aria-label="Самописец">
                    <svg width="28" height="18" viewBox="0 0 28 18" fill="none">
                      <path d="M1 2l2 5 2-1 2-3 2 4 2-1 2-3 2 4 2-1 2-3 2 4 2-1 2-3v3" stroke="#e02020" />
                      <path d="M1 13l2-1 2 3 2 1 2-4 2 3 2 1 2-4 2 3 2 1 2-4 2 3 4-2" stroke="#2040e0" />
                      <path d="M27 3v4l-3-2zM27 11v4l-3-2z" fill="#222" />
                    </svg>
                  </Push>
                  <Push $w={25} aria-label="Авто диапазон"><AutoKnob /></Push>
                </Line>
                <Line>
                  <Push $w={67}>
                    <svg width="9" height="14" viewBox="0 0 9 14"><path d="M0 0v14l9-7z" fill="#18e028" /></svg>
                    Пуск
                  </Push>
                  <Value>60.95</Value>
                  <Push $w={25} aria-label="Авто пуск"><AutoRun /></Push>
                </Line>
              </GroupRows>
            </Group>

            <Group $w={54}>
              <Legend>Таймеры</Legend>
              <GroupRows>
                <SyncRow>
                  <Push $w={40} $gap={6} $line="#77756a" aria-label="Таймер пуска"><Timer /><Arrow /></Push>
                </SyncRow>
                <SyncRow>
                  <Push $w={40} $gap={6} $line="#77756a" aria-label="Таймер остановки"><Timer out /><Arrow /></Push>
                </SyncRow>
              </GroupRows>
            </Group>
          </Groups>
        </Panel>

        <StatusBar>
          <Cell $w={152}>USB Осциллограф не подключен</Cell>
          <Cell />
          <Cell $w={39}>1.9</Cell>
        </StatusBar>
        <Strip />
      </Window>
    </>
  );
}
